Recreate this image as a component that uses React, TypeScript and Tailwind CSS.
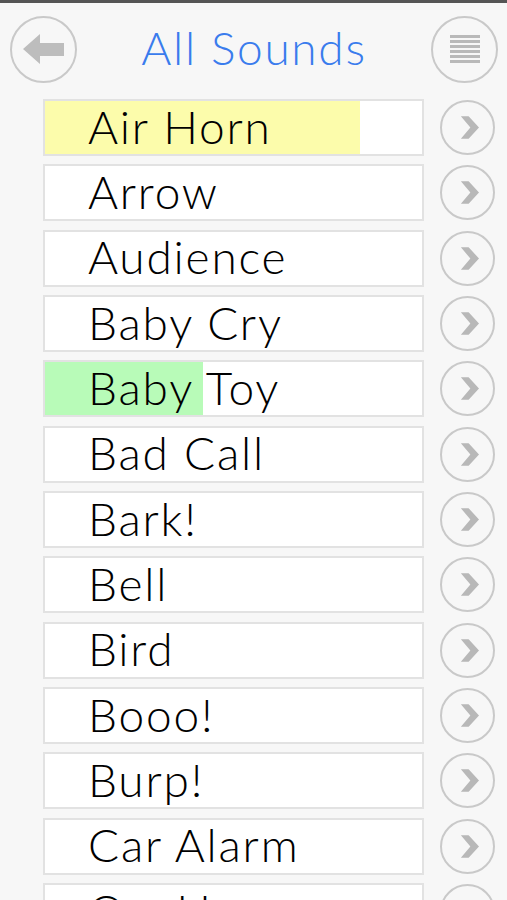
import React from "react";

type Sound = { name: string; fill?: string; pct?: number };

const sounds: Sound[] = [
  { name: "Air Horn", fill: "bg-[#fcfcab]", pct: 83.5 },
  { name: "Arrow" },
  { name: "Audience" },
  { name: "Baby Cry" },
  { name: "Baby Toy", fill: "bg-[#b8fbb8]", pct: 42 },
  { name: "Bad Call" },
  { name: "Bark!" },
  { name: "Bell" },
  { name: "Bird" },
  { name: "Booo!" },
  { name: "Burp!" },
  { name: "Car Alarm" },
  { name: "Car Horn" },
];

function CircleButton({ size, children }: { size: string; children: React.ReactNode }) {
  return (
    <div
      className={`${size} shrink-0 rounded-full border-2 border-[#c9c9c9] flex items-center justify-center`}
    >
      {children}
    </div>
  );
}

function Chevron() {
  return (
    <svg width="19" height="23" viewBox="0 0 22 26" className="ml-[3px]">
      <path d="M1 0 H10 L22 13 L10 26 H1 L12 13 Z" fill="#b8b8b8" />
    </svg>
  );
}

export default function App() {
  return (
    <div className="w-[507px] h-[900px] overflow-hidden bg-[#f7f7f7] font-['Lato',sans-serif]">
      <div className="h-[3px] bg-[#555]" />
      <div className="h-[96px] flex items-center justify-between pl-[10px] pr-[9px] pb-[4px]">
        <CircleButton size="w-[67px] h-[67px]">
          <svg width="44" height="32" viewBox="0 0 44 32">
            <path d="M1 16 L18 1 V10 H42 V23 H18 V31 Z" fill="#bdbdbd" />
          </svg>
        </CircleButton>
        <div className="text-[46px] font-light text-[#3a7ced] tracking-[1.7px] leading-none pb-[2px]">
          All Sounds
        </div>
        <CircleButton size="w-[67px] h-[67px]">
          <div className="flex flex-col gap-[2px] w-[30px]">
            {[0, 1, 2, 3, 4, 5].map((i) => (
              <div key={i} className="h-[3px] bg-[#b9b9b9]" />
            ))}
          </div>
        </CircleButton>
      </div>
      <div className="flex flex-col gap-[8.35px] pl-[43px]">
        {sounds.map((s) => (
          <div key={s.name} className="flex items-center">
            <div className="relative w-[381px] h-[57px] bg-white border-2 border-[#e2e2e2] overflow-hidden">
              {s.fill && (
                <div
                  className={`absolute left-0 top-0 bottom-0 ${s.fill}`}
                  style={{ width: `${s.pct}%` }}
                />
              )}
              <div className="relative h-full flex items-center pl-[43px] text-[46px] font-light tracking-[1.8px] text-black leading-none pb-[2px]">
                {s.name}
              </div>
            </div>
            <div className="ml-[16px]">
              <CircleButton size="w-[55px] h-[55px]">
                <Chevron />
              </CircleButton>
            </div>
          </div>
        ))}
      </div>
    </div>
  );
}
